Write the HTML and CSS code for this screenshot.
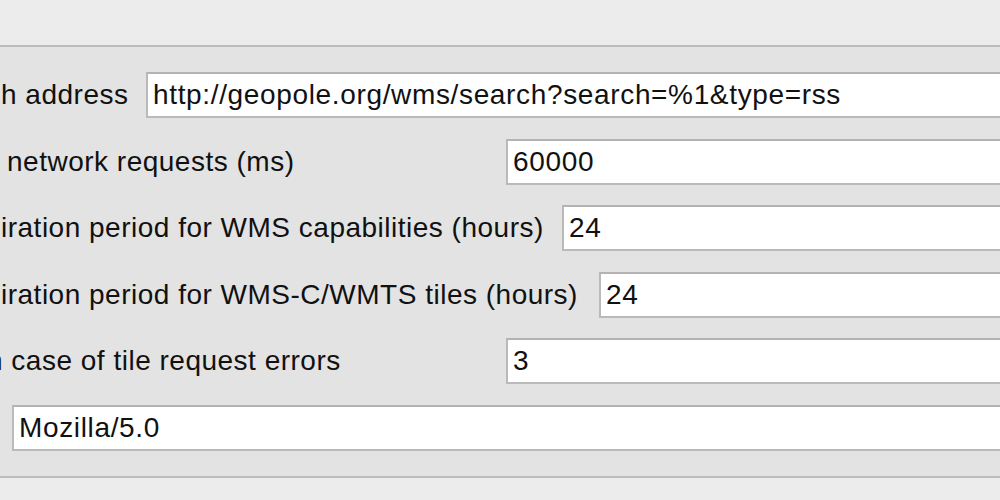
FILE: index.html
```html
<!DOCTYPE html>
<html>
<head>
<meta charset="utf-8">
<link rel="stylesheet" href="styles.css">
</head>
<body>
<div class="topbar"></div>
<div class="panel">
  <div class="row">
    <label class="label l1">h address</label>
    <input class="field" type="text" value="http://geopole.org/wms/search?search=%1&amp;type=rss">
  </div>
  <div class="row">
    <label class="label l2"><span class="t2">network requests (ms)</span></label>
    <input class="field" type="text" value="60000">
  </div>
  <div class="row">
    <label class="label l3">iration period for WMS capabilities (hours)</label>
    <input class="field" type="text" value="24">
  </div>
  <div class="row">
    <label class="label l4">iration period for WMS-C/WMTS tiles (hours)</label>
    <input class="field" type="text" value="24">
  </div>
  <div class="row">
    <label class="label l5"><span class="t5">n case of tile request errors</span></label>
    <input class="field" type="text" value="3">
  </div>
  <div class="row">
    <label class="label l6"></label>
    <input class="field" type="text" value="Mozilla/5.0">
  </div>
</div>
<div class="bottom"></div>
</body>
</html>
```
FILE: styles.css
```css
html, body {
  margin: 0;
  padding: 0;
  height: 100%;
  overflow: hidden;
}
body {
  display: flex;
  flex-direction: column;
  background: #ececec;
  font-family: "Liberation Sans", Arial, sans-serif;
  font-size: 28px;
  letter-spacing: 0.5px;
  color: #111111;
}
.topbar {
  height: 45px;
  flex: none;
  background: #ececec;
  border-bottom: 2px solid #bcbcbc;
}
.panel {
  flex: none;
  height: 431px;
  box-sizing: border-box;
  background: #e3e3e3;
  border-bottom: 2px solid #bcbcbc;
  padding-top: 25px;
  display: flex;
  flex-direction: column;
  gap: 20.6px;
  overflow: hidden;
}
.bottom {
  flex: 1;
  background: #ececec;
}
.row {
  display: flex;
  align-items: center;
  height: 46px;
  flex: none;
}
.label {
  flex: none;
  box-sizing: border-box;
  padding-left: 1px;
  white-space: nowrap;
  overflow: hidden;
}
.l1 { width: 146px; }
.l2 { width: 506px; }
.l3 { width: 562px; }
.l4 { width: 599px; }
.l5 { width: 506px; }
.l6 { width: 12px; }
.t2 { margin-left: 6px; }
.t5 { margin-left: -14px; display: inline-block; }
.field {
  flex: 1;
  min-width: 0;
  height: 46px;
  box-sizing: border-box;
  margin: 0 -40px 0 0;
  border: 2px solid #bababa;
  border-top-color: #b3b3b3;
  background: #ffffff;
  padding: 0 0 0 5px;
  font: inherit;
  letter-spacing: 0.65px;
  color: #111111;
  outline: none;
}
```
